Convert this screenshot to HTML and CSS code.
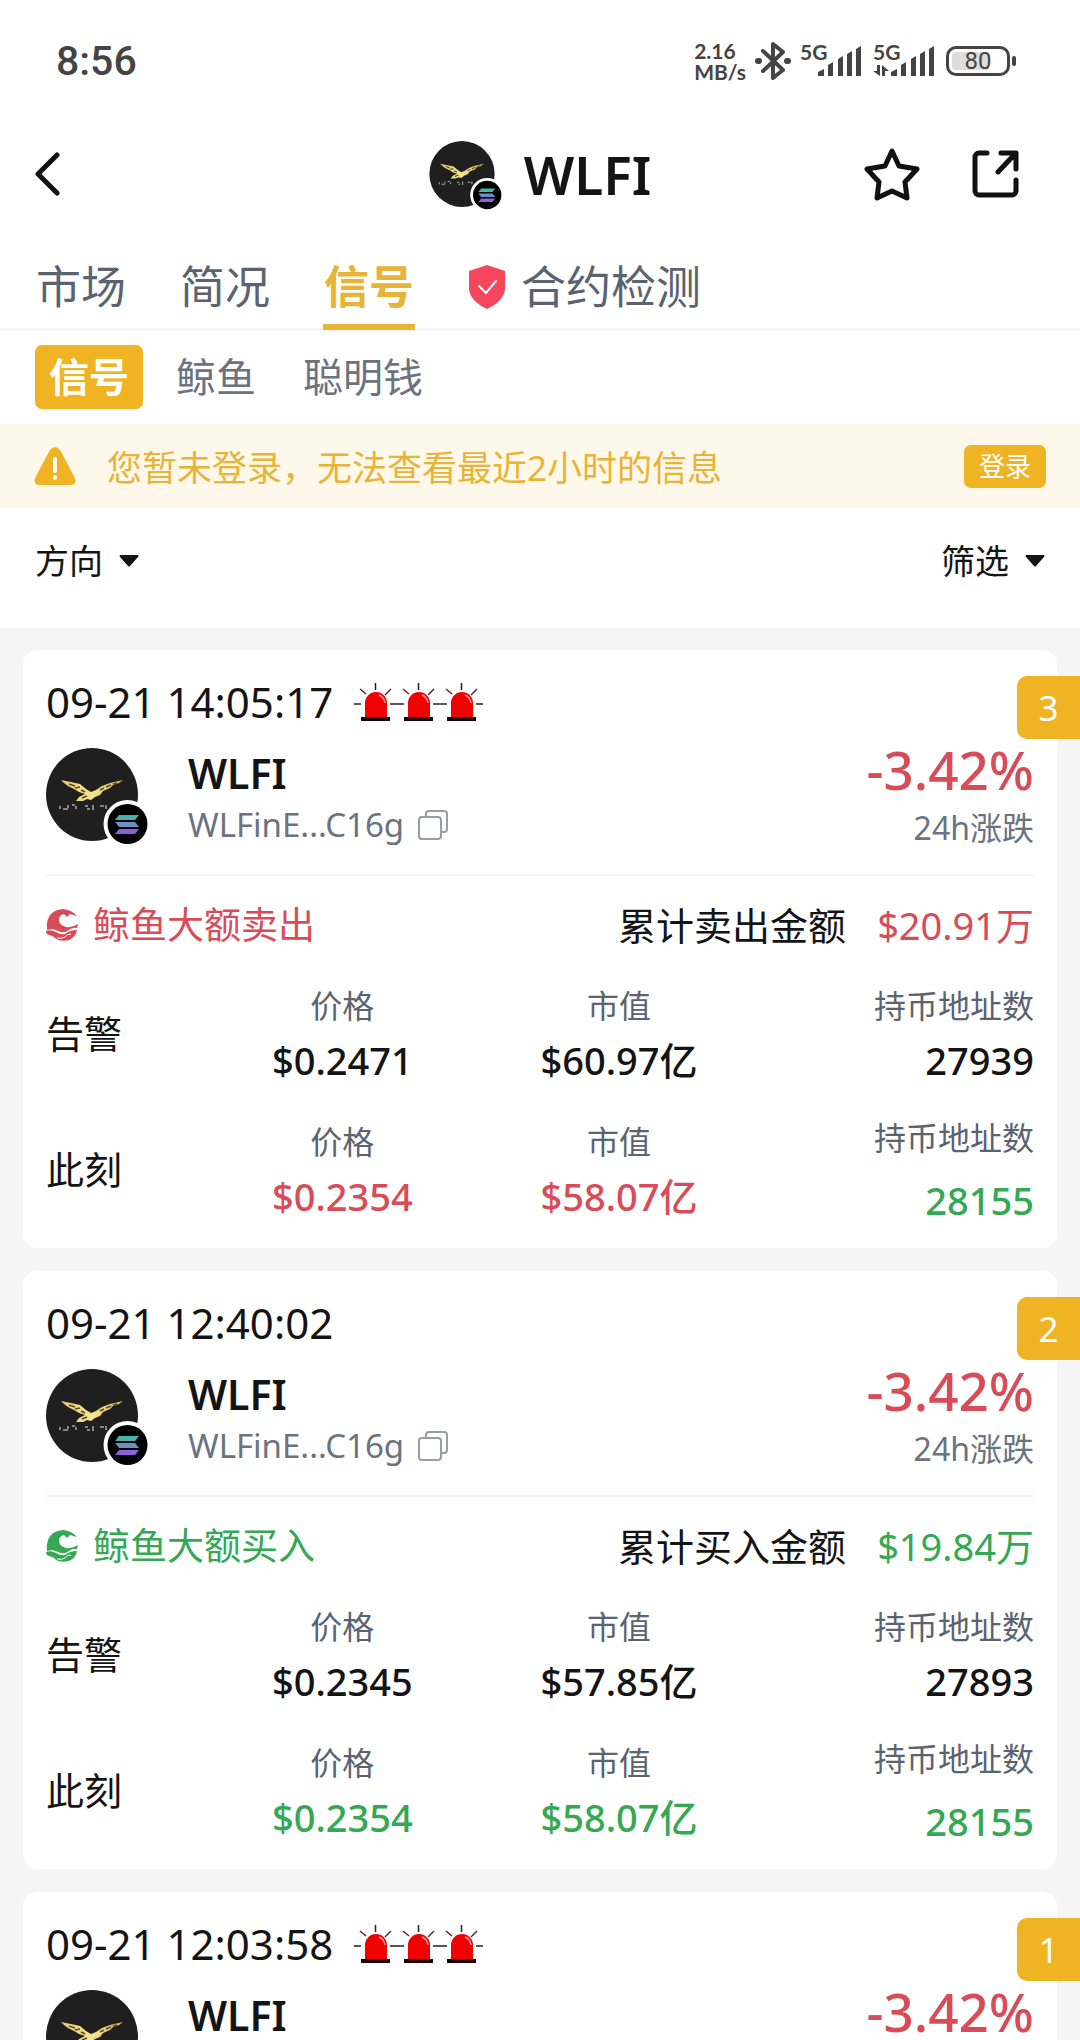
FILE: index.html
```html
<!DOCTYPE html>
<html lang="zh-CN">

<head>
  <meta charset="utf-8" />
  <meta name="viewport" content="width=device-width, initial-scale=1">
  <title>WLFI</title>
  <link rel="stylesheet" href="styles.css">
</head>

<body>
  <!-- shared icons -->
  <svg class="sprite" aria-hidden="true">
    <defs>
      <linearGradient id="gold" x1="0" y1="0" x2="1" y2="0">
        <stop offset="0" stop-color="#e3c873" />
        <stop offset="0.5" stop-color="#f8e48f" />
        <stop offset="1" stop-color="#d8b45c" />
      </linearGradient>
    </defs>
    <symbol id="coin" viewBox="0 0 92 93" overflow="visible">
      <ellipse cx="46" cy="46.500" rx="46" ry="46.500" fill="#1f1f1f" />
      <path fill="url(#gold)" d="M15 32L25 34L34 36L40 41L45 44L50 42L56 38L64 35L77 32L73 35L67 37L64 40L57 43L54 47L49 49L45 52L41 51L37 53L30 53L33 49L39 46L33 44L28 41L22 38L18 35Z" />
      <path d="M23 36l6 2M29 40l5-1M35 42l4 2M54 42l4-2M60 39l5-2M67 36l4-1M36 50l5-2" stroke="#5c4a22" stroke-width="1.500" />
      <path d="M14 58v3M17 61h5M22 57v3M26 57h3M30 58v3M39 58h3M41 61h3M47 57v5M54 58h4M60 57v4" stroke="#a9a9a9" stroke-width="1.500" />
      <circle cx="81.500" cy="76" r="24" fill="#fff" />
      <circle cx="81.500" cy="76" r="20" fill="#000" />
      <path fill="#45b3ab" d="M73 67h20l-4 5H69z" />
      <path fill="#6b8fc4" d="M69 74h20l4 5H73z" />
      <path fill="#8b60d8" d="M73 81h20l-4 5H69z" />
    </symbol>
    <symbol id="alarm" viewBox="0 0 43 40">
      <path d="M21.500 1v7M0 22h7M36 22h7" stroke="#222" stroke-width="1.500" />
      <path d="M6 7l6 5" stroke="#7c1a1a" stroke-width="1.500" />
      <path d="M37 7l-6 6" stroke="#333" stroke-width="1.500" />
      <path d="M11 35V21a10.500 10.500 0 0 1 22 0v14z" fill="#f00000" />
      <path d="M25 13q5 2 6 8" fill="none" stroke="#ff9a9a" stroke-width="1.500" />
      <path d="M7 35h29v4H7z" fill="#1c0000" />
    </symbol>
    <symbol id="whale" viewBox="0 0 32 32">
      <path d="M17 0Q5 1 2 10Q0 15 1 21Q7 19 12 22Q18 25 23 21Q27 18 31 19L32 15Q26 19 20 18Q13 16 13 11Q13 6 18 5L21 8L24 5L31 7Q26 1 17 0Z" />
      <path d="M0 22Q5 20 10 23Q15 26 19 25Q24 21 31 21Q30 28 23 31Q15 33 10 30Q8 27 3 26Q0 25 0 22Z" />
      <path d="M11 29Q16 30 19 28Q21 25 25 25" fill="none" stroke="#fff" stroke-width="1" />
    </symbol>
    <symbol id="copy" viewBox="0 0 30 30">
      <path d="M8 7V4a3 3 0 0 1 3-3h15a3 3 0 0 1 3 3v15a3 3 0 0 1-3 3h-3M4 7h16a3 3 0 0 1 3 3v16a3 3 0 0 1-3 3H4a3 3 0 0 1-3-3V10a3 3 0 0 1 3-3z" fill="none" stroke="#9a9da3" stroke-width="2" />
    </symbol>
    <symbol id="caret" viewBox="0 0 20 12">
      <path d="M1 0h18q1 1 0 2l-8 9q-1 1-2 0L1 2q-1-1 0-2z" fill="#141414" />
    </symbol>
  </svg>

  <div class="page">
    <div class="status">
      <span class="clock">8:56</span>
      <div class="statusIcons">
        <div class="speed"><span>2.16</span><span>MB/s</span></div>
        <svg class="bluetooth" viewBox="3 0 30 40" fill="none" stroke="#444" stroke-width="4" stroke-linejoin="round" stroke-linecap="round">
          <path d="M8 10l20 19-10 8V3l10 8L8 30" />
          <path d="M3 20h1M32 20h1" stroke-width="6" />
        </svg>
        <div class="signal">
          <span>5G</span>
          <svg viewBox="0 0 61 34" fill="#444">
            <path d="M18 32v-4l6-3v7zM28 32V21l5-3v14zM38 32V15l5-3v20zM47 32V10l5-3v25zM56 32V5l5-3v30z" />
          </svg>
        </div>
        <div class="signal">
          <span>5G</span>
          <svg viewBox="0 0 61 34" fill="#444">
            <path d="M18 32v-4l6-3v7zM28 32V21l5-3v14zM38 32V15l5-3v20zM47 32V10l5-3v25zM56 32V5l5-3v30z" />
            <path d="M4 21h3v11L0 27h4zM9 32V21l7 6h-4v5z" />
          </svg>
        </div>
        <div class="battery"><span>80</span></div>
      </div>
    </div>

    <header class="header">
      <button class="iconButton" aria-label="返回">
        <svg width="26" height="44" viewBox="0 0 26 44" fill="none" stroke="#111" stroke-width="5" stroke-linecap="round" stroke-linejoin="round"><path d="M22 3L3 22L22 41" /></svg>
      </button>
      <div class="title">
        <svg class="coinSmall"><use href="#coin" /></svg>
        <h1>WLFI</h1>
      </div>
      <div class="actions">
        <button class="iconButton" aria-label="收藏">
          <svg width="56" height="56" viewBox="0 0 56 56" fill="none" stroke="#111" stroke-width="5" stroke-linejoin="round"><path d="M28 5L35 20L53 23L41 36L43 52L28 45L13 52L15 36L3 23L21 20Z" /></svg>
        </button>
        <button class="iconButton" aria-label="分享">
          <svg width="50" height="50" viewBox="0 0 50 50" fill="none" stroke="#111" stroke-width="5" stroke-linecap="round" stroke-linejoin="round"><path d="M17 4H9a4 4 0 0 0-4 4v34a4 4 0 0 0 4 4h33a4 4 0 0 0 4-4V31M31 4h15v16M45 5L28 23" /></svg>
        </button>
      </div>
    </header>

    <nav class="tabs">
      <a href="#market">市场</a>
      <a href="#info">简况</a>
      <a href="#signal" class="active">信号</a>
      <a href="#check">
        <svg class="shield" viewBox="0 0 38 44"><path d="M19 0L37 6V24Q36 36 19 44Q2 36 1 24V6Z" fill="#f6465d" /><path d="M11 21l7 7 10-12" fill="none" stroke="#fff" stroke-width="2" stroke-linecap="round" /></svg>
        合约检测
      </a>
    </nav>

    <div class="subTabs">
      <button class="active">信号</button>
      <button>鲸鱼</button>
      <button>聪明钱</button>
    </div>

    <div class="notice">
      <svg class="warning" viewBox="0 0 42 38"><path d="M16 3Q21-3 26 3L41 31Q43 38 36 38H6Q-1 38 1 31Z" fill="#f0b323" /><path d="M21 12v12M21 30v1" stroke="#fff" stroke-width="4" stroke-linecap="round" /></svg>
      <p>您暂未登录，无法查看最近2小时的信息</p>
      <button class="login">登录</button>
    </div>

    <div class="filters">
      <div class="direction">
        <select aria-label="方向">
          <option>方向</option>
        </select>
        <svg class="caret"><use href="#caret" /></svg>
      </div>
      <button class="filterButton">筛选 <svg class="caret"><use href="#caret" /></svg></button>
    </div>

    <main class="list">
      <article class="card">
        <span class="badge">3</span>
        <div class="time">09-21 14:05:17
          <span class="alarms">
            <svg><use href="#alarm" /></svg><svg><use href="#alarm" /></svg><svg><use href="#alarm" /></svg>
          </span>
        </div>
        <div class="token">
          <svg class="coinBig"><use href="#coin" /></svg>
          <div class="names">
            <h2>WLFI</h2>
            <div class="address">WLFinE...C16g
              <button class="copy" aria-label="复制"><svg><use href="#copy" /></svg></button>
            </div>
          </div>
          <div class="change">
            <div class="percent">-3.42%</div>
            <div class="changeLabel">24h涨跌</div>
          </div>
        </div>
        <div class="summary">
          <div class="action red"><svg class="whale"><use href="#whale" /></svg>鲸鱼大额卖出</div>
          <div class="total">累计卖出金额 <span class="red">$20.91万</span></div>
        </div>
        <div class="row">
          <div class="rowName">告警</div>
          <div class="stat"><span>价格</span><b>$0.2471</b></div>
          <div class="stat"><span>市值</span><b>$60.97亿</b></div>
          <div class="stat holders"><span>持币地址数</span><b>27939</b></div>
        </div>
        <div class="row now">
          <div class="rowName">此刻</div>
          <div class="stat"><span>价格</span><b class="red">$0.2354</b></div>
          <div class="stat"><span>市值</span><b class="red">$58.07亿</b></div>
          <div class="stat holders"><span>持币地址数</span><b class="green">28155</b></div>
        </div>
      </article>

      <article class="card">
        <span class="badge">2</span>
        <div class="time">09-21 12:40:02</div>
        <div class="token">
          <svg class="coinBig"><use href="#coin" /></svg>
          <div class="names">
            <h2>WLFI</h2>
            <div class="address">WLFinE...C16g
              <button class="copy" aria-label="复制"><svg><use href="#copy" /></svg></button>
            </div>
          </div>
          <div class="change">
            <div class="percent">-3.42%</div>
            <div class="changeLabel">24h涨跌</div>
          </div>
        </div>
        <div class="summary">
          <div class="action green"><svg class="whale"><use href="#whale" /></svg>鲸鱼大额买入</div>
          <div class="total">累计买入金额 <span class="green">$19.84万</span></div>
        </div>
        <div class="row">
          <div class="rowName">告警</div>
          <div class="stat"><span>价格</span><b>$0.2345</b></div>
          <div class="stat"><span>市值</span><b>$57.85亿</b></div>
          <div class="stat holders"><span>持币地址数</span><b>27893</b></div>
        </div>
        <div class="row now">
          <div class="rowName">此刻</div>
          <div class="stat"><span>价格</span><b class="green">$0.2354</b></div>
          <div class="stat"><span>市值</span><b class="green">$58.07亿</b></div>
          <div class="stat holders"><span>持币地址数</span><b class="green">28155</b></div>
        </div>
      </article>

      <article class="card">
        <span class="badge">1</span>
        <div class="time">09-21 12:03:58
          <span class="alarms">
            <svg><use href="#alarm" /></svg><svg><use href="#alarm" /></svg><svg><use href="#alarm" /></svg>
          </span>
        </div>
        <div class="token">
          <svg class="coinBig"><use href="#coin" /></svg>
          <div class="names">
            <h2>WLFI</h2>
          </div>
          <div class="change">
            <div class="percent">-3.42%</div>
          </div>
        </div>
      </article>
    </main>
  </div>
</body>

</html>
```
FILE: styles.css
```css
/*
  site colors:
    yellow      #f0b323
    red         #d84c57
    green       #34a853
    grey text   #6b7280
    background  #f5f5f5
 */
* {
  box-sizing: border-box;
}

body {
  margin: 0;
  background-color: #f5f5f5;
  color: #141414;
  font-family: "Noto Sans", "Noto Sans CJK SC", sans-serif;
}

h1, h2, p {
  margin: 0;
}

button, select {
  border: none;
  margin: 0;
  padding: 0;
  background: none;
  color: inherit;
  font: inherit;
}

svg {
  display: block;
  flex: none;
}

.sprite {
  position: absolute;
  width: 0;
  height: 0;
}

.red {
  color: #d84c57;
}

.green {
  color: #34a853;
}

.page {
  height: 100vh;
  display: flex;
  flex-direction: column;
  overflow: hidden;
}

.page > * {
  flex: none;
  background-color: #fff;
}

/* phone status bar */
.status {
  height: 120px;
  padding: 2px 70px 0 56px;
  display: flex;
  align-items: center;
  justify-content: space-between;
  color: #444;
  font-family: Roboto, sans-serif;
}

.clock {
  font-size: 41px;
  font-weight: 500;
}

.statusIcons {
  display: flex;
  align-items: center;
  gap: 12px;
}

.speed {
  display: flex;
  flex-direction: column;
  font-family: Lato, sans-serif;
  font-size: 21px;
  font-weight: 700;
  line-height: 21px;
}

.bluetooth {
  width: 30px;
  height: 40px;
  overflow: visible;
}

.signal {
  position: relative;
}

.signal span {
  position: absolute;
  top: -3px;
  left: 0;
  font-family: Lato, sans-serif;
  font-size: 21px;
  font-weight: 700;
  line-height: 21px;
}

.signal svg {
  width: 61px;
  height: 34px;
}

.battery {
  position: relative;
  width: 64px;
  height: 30px;
  border: 3px solid #444;
  border-radius: 10px;
  background: linear-gradient(to right, #ddd 72%, #fff 72%) content-box;
  padding: 3px;
  display: flex;
  align-items: center;
  justify-content: center;
  font-size: 24px;
}

.battery::after {
  content: "";
  position: absolute;
  right: -9px;
  top: 7px;
  width: 4px;
  height: 10px;
  border-radius: 2px;
  background-color: #444;
}

/* header */
.header {
  height: 108px;
  padding: 0 60px 0 35px;
  display: grid;
  grid-template-columns: 1fr auto 1fr;
  align-items: center;
}

.title {
  display: flex;
  align-items: center;
  gap: 29px;
  margin-left: 25px;
}

.title h1 {
  padding-top: 2px;
  font-size: 53px;
  font-weight: 600;
  line-height: 66px;
}

.coinSmall {
  width: 66px;
  height: 66px;
  overflow: visible;
}

.actions {
  display: flex;
  align-items: center;
  justify-content: flex-end;
  gap: 50px;
}

/* tabs */
.tabs {
  display: flex;
  gap: 52px;
  padding: 26px 35px 0;
  border-bottom: 3px solid #f5f5f5;
}

.tabs a {
  display: flex;
  align-items: center;
  padding: 0 1px 5px;
  margin-bottom: -2px;
  border-bottom: 6px solid transparent;
  color: #5b6270;
  font-size: 45px;
  line-height: 65px;
  text-decoration: none;
}

.tabs a.active {
  border-color: #e8b437;
  color: #e8b437;
  font-weight: 600;
}

.shield {
  width: 38px;
  height: 44px;
  margin-right: 15px;
}

.subTabs {
  display: flex;
  gap: 19px;
  padding: 14px 35px 15px;
}

.subTabs button {
  padding: 0 14px;
  border-radius: 7px;
  color: #6b7280;
  font-size: 40px;
  line-height: 64px;
}

.subTabs button.active {
  background-color: #f0b323;
  color: #fff;
  font-weight: 600;
}

/* login notice */
.notice {
  display: flex;
  align-items: center;
  height: 84px;
  padding: 0 34px;
  background-color: #fef8ea;
  color: #e8b437;
}

.notice p {
  flex: 1;
  margin-left: 31px;
  padding-top: 3px;
  font-size: 35px;
  line-height: 50px;
}

.warning {
  width: 42px;
  height: 38px;
}

.login {
  padding: 0 15px;
  border-radius: 7px;
  background-color: #f0b323;
  color: #fff;
  font-size: 26px;
  line-height: 43px;
}

.filters {
  display: flex;
  justify-content: space-between;
  align-items: flex-start;
  padding: 28px 35px 42px;
  font-size: 34px;
  line-height: 50px;
}

.direction, .filterButton {
  position: relative;
  display: flex;
  align-items: center;
  gap: 16px;
}

.direction select {
  height: 50px;
  appearance: none;
}

.caret {
  width: 20px;
  height: 12px;
  pointer-events: none;
}

/* signal cards */
.page .list {
  flex: 1;
  min-height: 0;
  overflow: hidden;
  padding: 22px 23px 0;
  background-color: #f5f5f5;
}

.card {
  position: relative;
  margin-bottom: 23px;
  padding: 24px 23px 23px;
  border-radius: 14px;
  background-color: #fff;
}

.badge {
  position: absolute;
  top: 26px;
  right: -23px;
  width: 63px;
  border-radius: 10px 0 0 10px;
  background-color: #f0b323;
  color: #fff;
  font-size: 35px;
  line-height: 63px;
  text-align: center;
}

.time {
  display: flex;
  align-items: center;
  gap: 21px;
  font-size: 42px;
  line-height: 56px;
}

.alarms {
  display: flex;
}

.alarms svg {
  width: 43px;
  height: 40px;
}

.token {
  display: flex;
  margin-top: 18px;
  padding-bottom: 20px;
  border-bottom: 2px solid #f5f5f5;
}

.coinBig {
  width: 92px;
  height: 93px;
  overflow: visible;
}

.names {
  margin-left: 50px;
}

.names h2 {
  font-size: 41px;
  font-weight: 600;
  line-height: 50px;
}

.address {
  display: flex;
  align-items: center;
  gap: 14px;
  color: #6b7280;
  font-size: 33px;
  line-height: 54px;
}

.copy svg {
  width: 30px;
  height: 30px;
}

.change {
  margin-left: auto;
  text-align: right;
}

.percent {
  color: #d84c57;
  font-size: 53px;
  font-weight: 500;
  line-height: 44px;
}

.changeLabel {
  margin-top: 10px;
  color: #6b7280;
  font-size: 32px;
  line-height: 52px;
}

.summary {
  display: flex;
  justify-content: space-between;
  margin-top: 24px;
  font-size: 38px;
  line-height: 50px;
}

.action {
  display: flex;
  align-items: center;
  gap: 15px;
  font-size: 37px;
}

.whale {
  width: 32px;
  height: 32px;
  fill: currentColor;
}

.total {
  display: flex;
  gap: 31px;
}

.row {
  display: grid;
  grid-template-columns: 158px 1fr 1fr 1fr;
  grid-template-rows: 112px;
  align-items: center;
  margin-top: 27px;
}

.row.now {
  margin-top: 24px;
}

.rowName {
  font-size: 38px;
  line-height: 54px;
}

.stat {
  display: flex;
  flex-direction: column;
  align-items: center;
}

.stat span {
  color: #5b6270;
  font-size: 32px;
  line-height: 54px;
}

.stat b {
  font-size: 38px;
  font-weight: 500;
  line-height: 54px;
}

.stat.holders {
  align-items: flex-end;
}

.now .holders {
  gap: 8px;
}
```
